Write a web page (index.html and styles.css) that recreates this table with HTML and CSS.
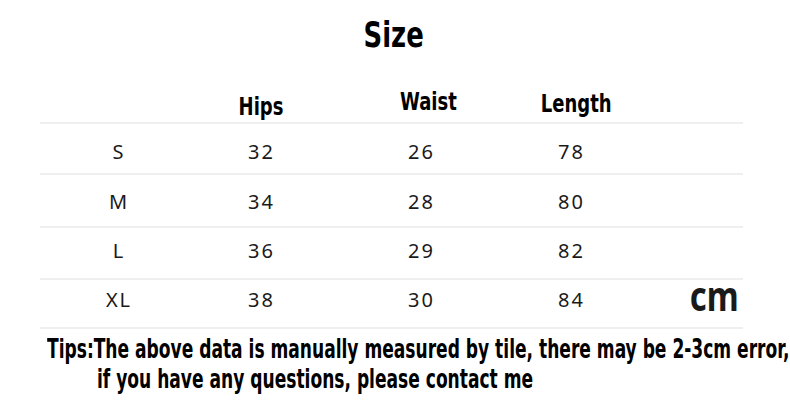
FILE: index.html
```html
<!DOCTYPE html>
<html>
<head>
<meta charset="utf-8">
<link rel="stylesheet" href="styles.css">
</head>
<body>
<div class="page">
  <h1 class="title"><span class="squeeze">Size</span></h1>
  <div class="chart">
    <div class="row head">
      <div class="cell"></div>
      <div class="cell h-hips"><span class="squeeze">Hips</span></div>
      <div class="cell h-waist"><span class="squeeze">Waist</span></div>
      <div class="cell h-length"><span class="squeeze">Length</span></div>
      <div class="cell"></div>
    </div>
    <div class="row row-1">
      <div class="cell">S</div><div class="cell">32</div><div class="cell">26</div><div class="cell">78</div><div class="cell"></div>
    </div>
    <div class="row row-2">
      <div class="cell">M</div><div class="cell">34</div><div class="cell">28</div><div class="cell">80</div><div class="cell"></div>
    </div>
    <div class="row row-3">
      <div class="cell">L</div><div class="cell">36</div><div class="cell">29</div><div class="cell">82</div><div class="cell"></div>
    </div>
    <div class="row row-4">
      <div class="cell">XL</div><div class="cell">38</div><div class="cell">30</div><div class="cell">84</div><div class="cell unit"><span class="squeeze-r">cm</span></div>
    </div>
  </div>
  <div class="tips">
    <p class="tip1"><span class="squeeze-l">Tips:The above data is manually measured by tile, there may be 2-3cm error,</span></p>
    <p class="tip2"><span class="squeeze-l">if you have any questions, please contact me</span></p>
  </div>
</div>
</body>
</html>
```

FILE: styles.css
```css
html, body {
  margin: 0;
  padding: 0;
  background: #ffffff;
}
.page {
  width: 790px;
  height: 415px;
  overflow: hidden;
}
.title, .head .cell, .unit, .tips p {
  font-family: "DejaVu Sans Condensed", "Liberation Sans", sans-serif;
  font-weight: 700;
  color: #000;
}
.squeeze {
  display: inline-block;
  transform: scaleX(0.8);
  transform-origin: center;
}
.squeeze-r {
  display: inline-block;
  transform: scaleX(0.78);
  transform-origin: right center;
}
.squeeze-l {
  display: inline-block;
  transform: scaleX(0.73);
  transform-origin: left center;
}
.title {
  margin: 0;
  padding-top: 15px;
  padding-right: 2px;
  height: 62px;
  box-sizing: border-box;
  text-align: center;
  font-size: 36px;
  line-height: 40px;
}
.chart {
  margin-left: 40px;
  width: 703px;
}
.row {
  display: grid;
  grid-template-columns: 158px 127px 193px 107px 118px;
  border-bottom: 2px solid #efefef;
  align-items: center;
}
.row.head {
  height: 60px;
  align-items: end;
}
.row-1 { height: 49px; }
.row-2 { height: 51px; }
.row-3 { height: 50px; }
.row-4 { height: 47px; }
.cell {
  text-align: center;
  font-family: "Noto Sans", "DejaVu Sans", sans-serif;
  font-size: 20px;
  line-height: 26px;
  letter-spacing: 2px;
  color: #1a1a1a;
}
.row-1 .cell { padding-top: 6px; }
.row-2 .cell { padding-top: 3px; }
.row-3 .cell { padding-bottom: 5px; }
.row-4 .cell { padding-bottom: 8px; }
.head .cell {
  font-size: 25px;
  letter-spacing: 0;
  line-height: 28px;
}
.h-hips { padding-bottom: 1px; }
.h-waist { padding-bottom: 6px; padding-left: 13px; }
.h-length { padding-bottom: 4px; padding-left: 9px; }
.row .unit {
  align-self: start;
  font-size: 42px;
  line-height: 30px;
  letter-spacing: 0;
  text-align: right;
  padding: 0 4px 0 0;
}
.tips {
  padding-top: 5px;
}
.tips p {
  margin: 0;
  font-size: 26px;
  line-height: 30px;
  white-space: nowrap;
}
.tip1 { padding-left: 47px; }
.tip2 { padding-left: 97px; }
```
